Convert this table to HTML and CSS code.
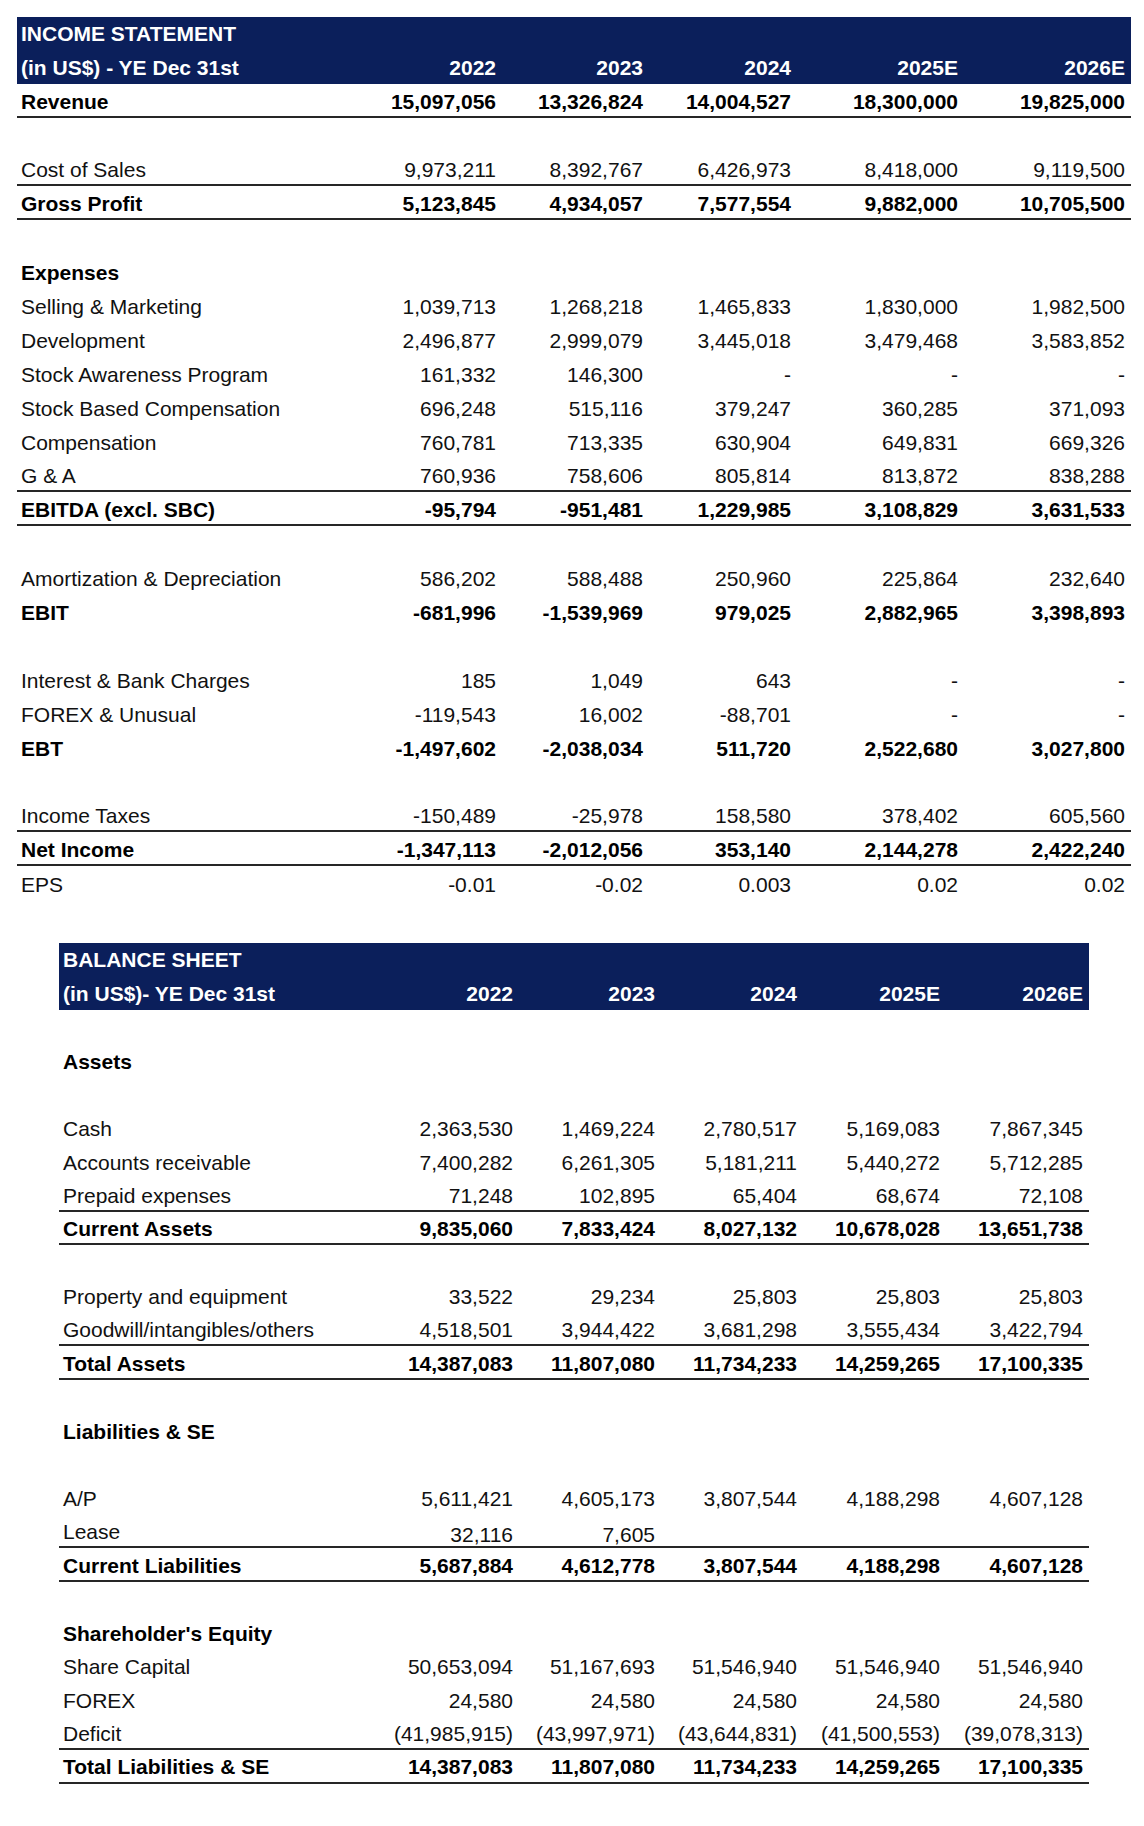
FILE: index.html
```html
<!DOCTYPE html>
<html lang="en">
<head>
<meta charset="utf-8">
<title>Income Statement &amp; Balance Sheet</title>
<link rel="stylesheet" href="styles.css">
</head>
<body>
<main class="sheet">
  <section class="table income">
    <div class="head">
      <div class="row"><span>INCOME STATEMENT</span><span></span><span></span><span></span><span></span><span></span></div>
      <div class="row"><span>(in US$) - YE Dec 31st</span><span>2022</span><span>2023</span><span>2024</span><span>2025E</span><span>2026E</span></div>
    </div>
    <div class="row b rule"><span>Revenue</span><span>15,097,056</span><span>13,326,824</span><span>14,004,527</span><span>18,300,000</span><span>19,825,000</span></div>
    <div class="row"></div>
    <div class="row rule"><span>Cost of Sales</span><span>9,973,211</span><span>8,392,767</span><span>6,426,973</span><span>8,418,000</span><span>9,119,500</span></div>
    <div class="row b rule"><span>Gross Profit</span><span>5,123,845</span><span>4,934,057</span><span>7,577,554</span><span>9,882,000</span><span>10,705,500</span></div>
    <div class="row"></div>
    <div class="row b"><span>Expenses</span></div>
    <div class="row"><span>Selling &amp; Marketing</span><span>1,039,713</span><span>1,268,218</span><span>1,465,833</span><span>1,830,000</span><span>1,982,500</span></div>
    <div class="row"><span>Development</span><span>2,496,877</span><span>2,999,079</span><span>3,445,018</span><span>3,479,468</span><span>3,583,852</span></div>
    <div class="row"><span>Stock Awareness Program</span><span>161,332</span><span>146,300</span><span>-</span><span>-</span><span>-</span></div>
    <div class="row"><span>Stock Based Compensation</span><span>696,248</span><span>515,116</span><span>379,247</span><span>360,285</span><span>371,093</span></div>
    <div class="row"><span>Compensation</span><span>760,781</span><span>713,335</span><span>630,904</span><span>649,831</span><span>669,326</span></div>
    <div class="row rule"><span>G &amp; A</span><span>760,936</span><span>758,606</span><span>805,814</span><span>813,872</span><span>838,288</span></div>
    <div class="row b rule"><span>EBITDA (excl. SBC)</span><span>-95,794</span><span>-951,481</span><span>1,229,985</span><span>3,108,829</span><span>3,631,533</span></div>
    <div class="row"></div>
    <div class="row"><span>Amortization &amp; Depreciation</span><span>586,202</span><span>588,488</span><span>250,960</span><span>225,864</span><span>232,640</span></div>
    <div class="row b"><span>EBIT</span><span>-681,996</span><span>-1,539,969</span><span>979,025</span><span>2,882,965</span><span>3,398,893</span></div>
    <div class="row"></div>
    <div class="row"><span>Interest &amp; Bank Charges</span><span>185</span><span>1,049</span><span>643</span><span>-</span><span>-</span></div>
    <div class="row"><span>FOREX &amp; Unusual</span><span>-119,543</span><span>16,002</span><span>-88,701</span><span>-</span><span>-</span></div>
    <div class="row b"><span>EBT</span><span>-1,497,602</span><span>-2,038,034</span><span>511,720</span><span>2,522,680</span><span>3,027,800</span></div>
    <div class="row"></div>
    <div class="row rule"><span>Income Taxes</span><span>-150,489</span><span>-25,978</span><span>158,580</span><span>378,402</span><span>605,560</span></div>
    <div class="row b rule"><span>Net Income</span><span>-1,347,113</span><span>-2,012,056</span><span>353,140</span><span>2,144,278</span><span>2,422,240</span></div>
    <div class="row"><span>EPS</span><span>-0.01</span><span>-0.02</span><span>0.003</span><span>0.02</span><span>0.02</span></div>
  </section>

  <section class="table balance">
    <div class="head">
      <div class="row"><span>BALANCE SHEET</span><span></span><span></span><span></span><span></span><span></span></div>
      <div class="row"><span>(in US$)- YE Dec 31st</span><span>2022</span><span>2023</span><span>2024</span><span>2025E</span><span>2026E</span></div>
    </div>
    <div class="row"></div>
    <div class="row b"><span>Assets</span></div>
    <div class="row"></div>
    <div class="row"><span>Cash</span><span>2,363,530</span><span>1,469,224</span><span>2,780,517</span><span>5,169,083</span><span>7,867,345</span></div>
    <div class="row"><span>Accounts receivable</span><span>7,400,282</span><span>6,261,305</span><span>5,181,211</span><span>5,440,272</span><span>5,712,285</span></div>
    <div class="row rule"><span>Prepaid expenses</span><span>71,248</span><span>102,895</span><span>65,404</span><span>68,674</span><span>72,108</span></div>
    <div class="row b rule"><span>Current Assets</span><span>9,835,060</span><span>7,833,424</span><span>8,027,132</span><span>10,678,028</span><span>13,651,738</span></div>
    <div class="row"></div>
    <div class="row"><span>Property and equipment</span><span>33,522</span><span>29,234</span><span>25,803</span><span>25,803</span><span>25,803</span></div>
    <div class="row rule"><span>Goodwill/intangibles/others</span><span>4,518,501</span><span>3,944,422</span><span>3,681,298</span><span>3,555,434</span><span>3,422,794</span></div>
    <div class="row b rule"><span>Total Assets</span><span>14,387,083</span><span>11,807,080</span><span>11,734,233</span><span>14,259,265</span><span>17,100,335</span></div>
    <div class="row"></div>
    <div class="row b"><span>Liabilities &amp; SE</span></div>
    <div class="row"></div>
    <div class="row"><span>A/P</span><span>5,611,421</span><span>4,605,173</span><span>3,807,544</span><span>4,188,298</span><span>4,607,128</span></div>
    <div class="row rule"><span>Lease</span><span class="low">32,116</span><span class="low">7,605</span><span></span><span></span><span></span></div>
    <div class="row b rule"><span>Current Liabilities</span><span>5,687,884</span><span>4,612,778</span><span>3,807,544</span><span>4,188,298</span><span>4,607,128</span></div>
    <div class="row"></div>
    <div class="row b"><span>Shareholder's Equity</span></div>
    <div class="row"><span>Share Capital</span><span>50,653,094</span><span>51,167,693</span><span>51,546,940</span><span>51,546,940</span><span>51,546,940</span></div>
    <div class="row"><span>FOREX</span><span>24,580</span><span>24,580</span><span>24,580</span><span>24,580</span><span>24,580</span></div>
    <div class="row rule"><span>Deficit</span><span>(41,985,915)</span><span>(43,997,971)</span><span>(43,644,831)</span><span>(41,500,553)</span><span>(39,078,313)</span></div>
    <div class="row b rule"><span>Total Liabilities &amp; SE</span><span>14,387,083</span><span>11,807,080</span><span>11,734,233</span><span>14,259,265</span><span>17,100,335</span></div>
  </section>
</main>
</body>
</html>
```

FILE: styles.css
```css
html, body {
  margin: 0;
  padding: 0;
  background: #ffffff;
}

body {
  font-family: "Liberation Sans", Arial, sans-serif;
  font-size: 21px;
  color: #111111;
}

.sheet {
  display: flex;
  flex-direction: column;
  align-items: flex-start;
  padding-top: 17px;
}

.table {
  display: flex;
  flex-direction: column;
}

.income {
  margin-left: 17px;
  width: 1114px;
}

.balance {
  margin-left: 59px;
  width: 1030px;
  margin-top: 43px;
}

.row {
  display: grid;
  align-items: center;
  box-sizing: border-box;
}

.income .row {
  grid-template-columns: 338px 147px 147px 148px 167px 167px;
  height: 34px;
}

.balance .row {
  grid-template-columns: 318px 142px 142px 142px 143px 143px;
  height: 33.65px;
}

.head {
  background: #0b1f5b;
  color: #ffffff;
  font-weight: bold;
}

.head .row,
.income .head .row,
.balance .head .row {
  height: 33.5px;
}

.row > span {
  padding: 3px 6px 0 4px;
  text-align: right;
  white-space: nowrap;
}

.head .row > span {
  padding-top: 1px;
}

.row > span:first-child {
  text-align: left;
}

.b {
  font-weight: bold;
  color: #000000;
}

.rule {
  border-bottom: 2px solid #262626;
}

.row > span.low {
  padding-top: 8px;
}
```
